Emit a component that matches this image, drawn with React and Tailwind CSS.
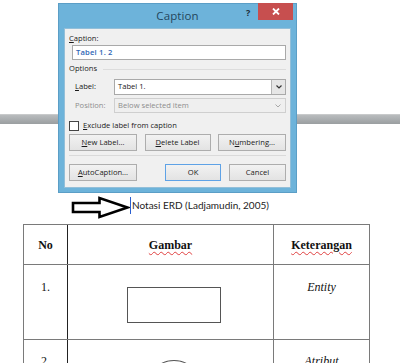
import React from "react";

const ui = { fontFamily: '"Open Sans", "Noto Sans", sans-serif' };
const serif = { fontFamily: '"Liberation Serif", "Times New Roman", serif' };

function Btn({ children, className = "", primary = false }) {
  return (
    <div
      className={`h-[17px] flex items-center justify-center border ${
        primary ? "border-[#5ea2e6]" : "border-[#adadad]"
      } bg-gradient-to-b from-[#f2f2f2] to-[#e3e3e3] text-[7.6px] text-[#1a1a1a] ${className}`}
    >
      {children}
    </div>
  );
}

function Squiggle({ children }) {
  return (
    <span className="underline decoration-wavy decoration-[#e04040] decoration-[1px] underline-offset-[2px]">
      {children}
    </span>
  );
}

export default function App() {
  return (
    <div className="relative w-[400px] h-[363px] overflow-hidden bg-white">
      {/* page */}
      <div className="h-[114px]" />
      <div className="h-[10px] bg-gradient-to-b from-[#b9bcbe] to-[#9a9ea0] border-t border-[#c8cacb]" />
      <div className="mt-[71px] ml-[70px] h-[25px] flex items-start">
        <svg width="60" height="25" viewBox="0 0 60 25" className="shrink-0">
          <path
            d="M3 8 L29.5 8 L29.5 3 L57.5 12.5 L29.5 22 L29.5 17 L3 17 Z"
            fill="white"
            stroke="black"
            strokeWidth="2.6"
            strokeLinejoin="miter"
          />
        </svg>
        <div className="mt-[2px] w-px h-[17px] bg-[#2a5fd0]" />
        <div
          className="mt-[3px] ml-px text-[10px] leading-[14px] text-[#222]"
          style={{ fontFamily: 'Lato, "Open Sans", sans-serif' }}
        >
          Notasi ERD (Ladjamudin, 2005)
        </div>
      </div>
      <div className="ml-[23px] mt-[4px] w-[347px] text-[#111]" style={serif}>
        <div className="flex h-[41px] border border-[#7a7a7a]">
          <div className="w-[44px] flex items-center justify-center font-bold text-[12px] border-r border-[#222]">
            No
          </div>
          <div className="w-[206px] flex items-center justify-center font-bold text-[12px] border-r border-[#7a7a7a]">
            <Squiggle>Gambar</Squiggle>
          </div>
          <div className="flex-1 flex items-center justify-center font-bold text-[12px]">
            <Squiggle>Keterangan</Squiggle>
          </div>
        </div>
        <div className="flex h-[75px] border-x border-b border-[#7a7a7a]">
          <div className="w-[44px] pt-[13px] flex justify-center text-[12px] border-r border-[#222]">1.</div>
          <div className="w-[206px] border-r border-[#7a7a7a] pt-[22px] pl-[59px]">
            <div className="w-[94px] h-[36px] border border-[#555]" />
          </div>
          <div className="flex-1 pt-[13px] flex justify-center text-[12px] italic">Entity</div>
        </div>
        <div className="flex h-[40px] border-x border-[#7a7a7a]">
          <div className="w-[44px] pt-[12px] flex justify-center text-[12px] border-r border-[#222]">2.</div>
          <div className="w-[206px] border-r border-[#7a7a7a] pt-[20px] pl-[87px]">
            <div className="w-[38px] h-[24px] rounded-[50%] border border-[#555]" />
          </div>
          <div className="flex-1 pt-[12px] flex justify-center text-[12px] italic">Atribut</div>
        </div>
      </div>

      {/* dialog window */}
      <div
        className="absolute left-[58px] top-[3px] w-[239px] h-[190px] bg-[#6db3da] border border-[#5b9ec6] flex flex-col"
        style={ui}
      >
        <div className="relative h-[24px] flex items-center justify-center">
          <span className="text-[11.5px] text-[#24465c] tracking-[0.1px]">Caption</span>
          <span className="absolute left-[187px] top-[2px] text-[9px] font-bold text-[#1b2e3a]">?</span>
          <div className="absolute right-[3px] top-[-1px] w-[35px] h-[17px] bg-[#c74f4f] flex items-center justify-center">
            <svg width="8" height="7" viewBox="0 0 8 7">
              <path d="M1 0.5 L7 6.5 M7 0.5 L1 6.5" stroke="white" strokeWidth="1.8" />
            </svg>
          </div>
        </div>
        <div className="mx-[5px] mb-[4px] flex-1 bg-[#f0f0f0] border border-[#93bfd9] px-[4px] pt-[3px] flex flex-col text-[7.6px] text-[#1a1a1a]">
          <div className="h-[12px] leading-[12px]">
            <span className="underline">C</span>aption:
          </div>
          <div className="mt-[1px] ml-[3px] h-[15px] bg-white border border-[#a9a9a9] flex items-center pl-[3px] text-[#2e66b5] font-semibold tracking-[0.2px]">
            Tabel 1. 2
          </div>
          <div className="mt-[3px] h-[12px] flex items-center">
            <span>Options</span>
            <div className="ml-[6px] flex-1 h-px bg-[#dcdcdc]" />
          </div>
          <div className="mt-[4px] h-[16px] flex items-center">
            <div className="w-[45px] pl-[6px]">
              <span className="underline">L</span>abel:
            </div>
            <div className="flex-1 h-[16px] bg-white border border-[#a9a9a9] flex items-center">
              <span className="flex-1 pl-[3px]">Tabel 1.</span>
              <div className="w-[14px] h-[14px] bg-[#e6e6e6] border-l border-[#b5b5b5] flex items-center justify-center">
                <svg width="6" height="4" viewBox="0 0 6 4">
                  <path d="M0.5 0.5 L3 3 L5.5 0.5" fill="none" stroke="#333" strokeWidth="1.2" />
                </svg>
              </div>
            </div>
          </div>
          <div className="mt-[3px] h-[15px] flex items-center text-[#8d8d8d]">
            <div className="w-[45px] pl-[6px]">Position:</div>
            <div className="flex-1 h-[15px] bg-[#efefef] border border-[#cfcfcf] flex items-center">
              <span className="flex-1 pl-[3px]">Below selected item</span>
              <div className="w-[14px] h-[13px] flex items-center justify-center">
                <svg width="6" height="4" viewBox="0 0 6 4">
                  <path d="M0.5 0.5 L3 3 L5.5 0.5" fill="none" stroke="#a8a8a8" strokeWidth="1" />
                </svg>
              </div>
            </div>
          </div>
          <div className="mt-[8px] h-[10px] flex items-center">
            <div className="w-[10px] h-[10px] bg-white border border-[#444]" />
            <span className="ml-[4px]">
              <span className="underline">E</span>xclude label from caption
            </span>
          </div>
          <div className="mt-[3px] flex justify-between">
            <Btn className="w-[68px]">
              <span>
                <span className="underline">N</span>ew Label...
              </span>
            </Btn>
            <Btn className="w-[66px]">
              <span>
                <span className="underline">D</span>elete Label
              </span>
            </Btn>
            <Btn className="w-[68px]">
              <span>
                N<span className="underline">u</span>mbering...
              </span>
            </Btn>
          </div>
          <div className="mt-[4px] h-px bg-[#dadada]" />
          <div className="mt-[8px] flex gap-[8px]">
            <Btn className="w-[68px]">
              <span>
                <span className="underline">A</span>utoCaption...
              </span>
            </Btn>
            <Btn className="w-[56px] ml-auto" primary>
              OK
            </Btn>
            <Btn className="w-[57px]">Cancel</Btn>
          </div>
        </div>
      </div>
    </div>
  );
}
